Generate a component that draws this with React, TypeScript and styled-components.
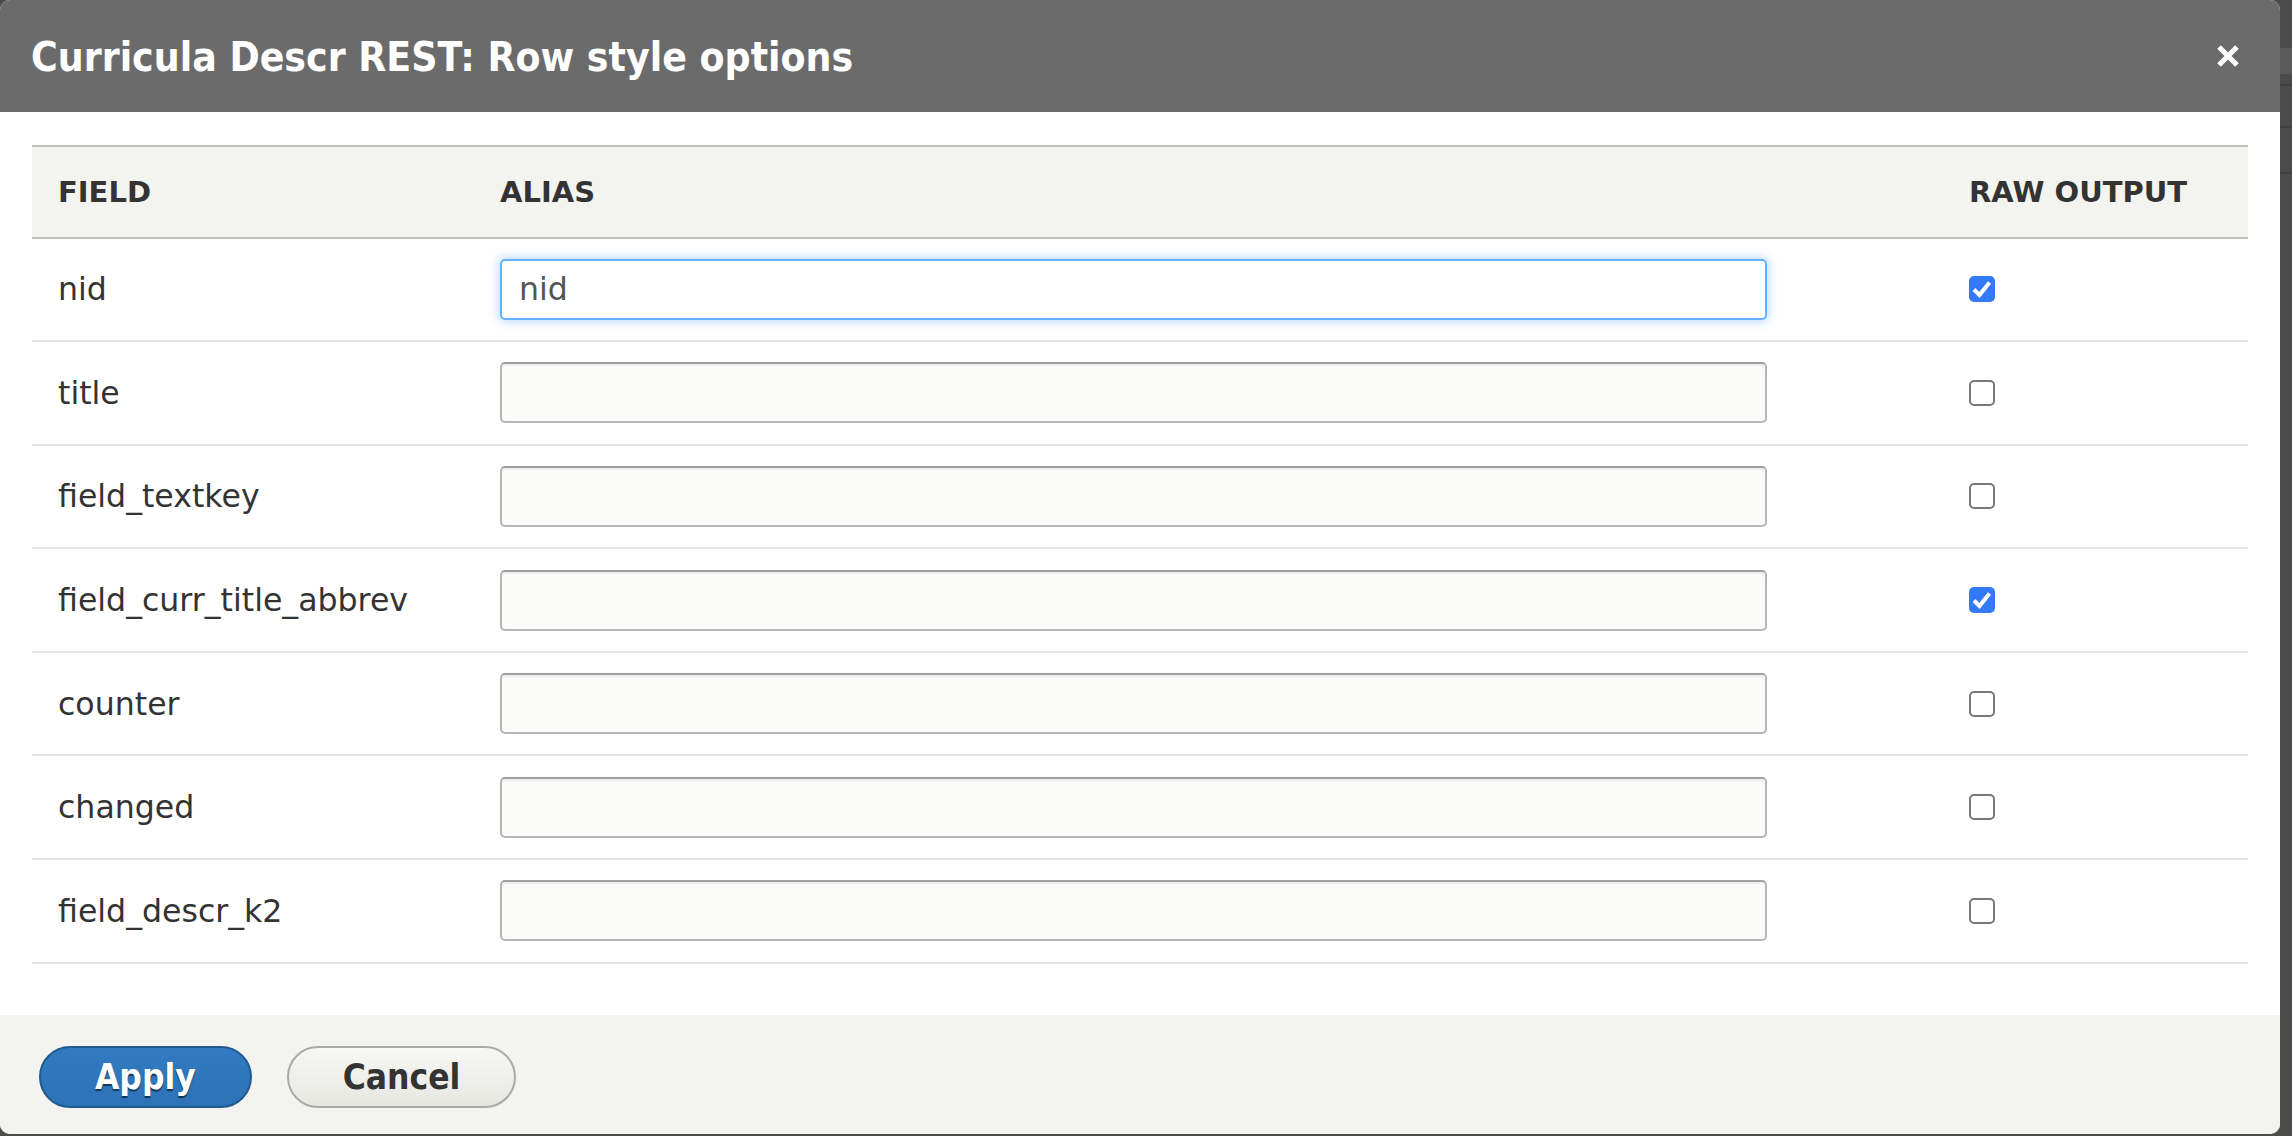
import React from "react";
import styled, { createGlobalStyle } from "styled-components";

const GlobalStyle = createGlobalStyle`
  html, body {
    margin: 0;
    padding: 0;
    background: #4c4c4c;
    overflow: hidden;
  }
  * { box-sizing: border-box; }
`;

const Page = styled.div`
  display: flex;
  width: 2292px;
  height: 1136px;
  background: #4c4c4c;
`;

const Dialog = styled.div`
  width: 2280px;
  height: 1134px;
  flex: none;
  display: flex;
  flex-direction: column;
  background: #ffffff;
  border-radius: 10px;
  overflow: hidden;
`;

const BackdropStrip = styled.div`
  flex: 1;
  height: 100%;
  background:
    linear-gradient(#5a5a5a, #5a5a5a) 0 48px / 100% 26px no-repeat,
    linear-gradient(#3f3f3f, #3f3f3f) 0 84px / 100% 2px no-repeat,
    linear-gradient(#3f3f3f, #3f3f3f) 0 126px / 100% 2px no-repeat,
    linear-gradient(#3f3f3f, #3f3f3f) 0 172px / 100% 2px no-repeat,
    #4b4b4b;
`;

const TitleBar = styled.div`
  height: 112px;
  flex: none;
  display: flex;
  align-items: center;
  justify-content: space-between;
  padding: 0 40px 0 31px;
  background: #6b6b6b;
`;

const Title = styled.h1`
  margin: 0;
  color: #ffffff;
  font-family: "DejaVu Sans Condensed", "DejaVu Sans", sans-serif;
  font-weight: 700;
  font-size: 40.5px;
  line-height: 1;
  padding-top: 2px;
`;

const CloseButton = styled.button`
  width: 24px;
  height: 24px;
  padding: 0;
  border: 0;
  background: transparent;
  display: flex;
  align-items: center;
  justify-content: center;
  cursor: pointer;
`;

const Body = styled.div`
  flex: 1;
  padding: 33px 32px 0 32px;
`;

const Table = styled.table`
  width: 100%;
  border-collapse: collapse;
  table-layout: fixed;
  font-family: "DejaVu Sans", sans-serif;
  color: #333333;
`;

const HeadRow = styled.tr`
  background: #f3f3ef;
  border-top: 2px solid #bfbfba;
  border-bottom: 2px solid #bfbfba;
`;

const HeadCell = styled.th`
  height: 91.5px;
  padding: 0 26px;
  text-align: left;
  font-size: 29px;
  font-weight: 700;
  text-transform: uppercase;
  color: #333333;
  white-space: nowrap;
`;

const Row = styled.tr`
  border-bottom: 2px solid #e6e5e0;
`;

const Cell = styled.td`
  height: 103.6px;
  padding: 0 26px;
  font-size: 31.6px;
  color: #333333;
  vertical-align: middle;
  white-space: nowrap;
`;

const TextInput = styled.input<{ $focused?: boolean }>`
  display: block;
  width: 1267px;
  height: 61px;
  padding: 0 17px;
  border-radius: 5px;
  font-family: "DejaVu Sans", sans-serif;
  font-size: 31.6px;
  color: #555555;
  outline: none;
  ${(p) =>
    p.$focused
      ? `
    background: #ffffff;
    border: 2px solid #63b1fa;
    box-shadow: 0 0 10px 2px rgba(110, 180, 255, 0.45);
  `
      : `
    background: #fbfbf9;
    border: 2px solid #b6b6b6;
    border-top-color: #a0a0a0;
    box-shadow: inset 0 2px 2px rgba(0, 0, 0, 0.06);
  `}
`;

const CheckBox = styled.span<{ $checked?: boolean }>`
  display: flex;
  align-items: center;
  justify-content: center;
  width: 26px;
  height: 26px;
  border-radius: 5px;
  ${(p) =>
    p.$checked
      ? `background: #3479f6; border: 0;`
      : `background: #ffffff; border: 2px solid #787878;`}
`;

const Footer = styled.div`
  flex: none;
  height: 119px;
  display: flex;
  align-items: flex-start;
  gap: 35px;
  padding: 31px 39px 0 39px;
  background: #f3f3ef;
`;

const Button = styled.button<{ $primary?: boolean }>`
  height: 62px;
  padding: 0 54px;
  border-radius: 31px;
  font-family: "DejaVu Sans Condensed", "DejaVu Sans", sans-serif;
  font-weight: 700;
  font-size: 35px;
  line-height: 1;
  cursor: pointer;
  ${(p) =>
    p.$primary
      ? `
    color: #ffffff;
    background: linear-gradient(#317bc2, #2d72b6);
    border: 2px solid #22598f;
    text-shadow: 0 2px 1px rgba(0, 0, 0, 0.55);
  `
      : `
    color: #333333;
    background: linear-gradient(#f7f7f4, #e7e7e2);
    border: 2px solid #a9a9a9;
  `}
`;

const fields: { name: string; alias: string; raw: boolean; focused?: boolean }[] = [
  { name: "nid", alias: "nid", raw: true, focused: true },
  { name: "title", alias: "", raw: false },
  { name: "field_textkey", alias: "", raw: false },
  { name: "field_curr_title_abbrev", alias: "", raw: true },
  { name: "counter", alias: "", raw: false },
  { name: "changed", alias: "", raw: false },
  { name: "field_descr_k2", alias: "", raw: false },
];

const CloseIcon = () => (
  <svg width="24" height="24" viewBox="0 0 24 24">
    <path d="M3 3 L21 21 M21 3 L3 21" stroke="#ffffff" strokeWidth="5" strokeLinecap="butt" />
  </svg>
);

const CheckIcon = () => (
  <svg width="26" height="26" viewBox="0 0 26 26">
    <path d="M5 13.5 L10.5 19 L20.5 6.5" stroke="#ffffff" strokeWidth="4" fill="none" strokeLinejoin="miter" />
  </svg>
);

export default function App() {
  return (
    <>
      <GlobalStyle />
      <Page>
        <Dialog>
          <TitleBar>
            <Title>Curricula Descr REST: Row style options</Title>
            <CloseButton aria-label="Close">
              <CloseIcon />
            </CloseButton>
          </TitleBar>
          <Body>
            <Table>
              <colgroup>
                <col style={{ width: "442px" }} />
                <col style={{ width: "1469px" }} />
                <col />
              </colgroup>
              <thead>
                <HeadRow>
                  <HeadCell>Field</HeadCell>
                  <HeadCell>Alias</HeadCell>
                  <HeadCell>Raw output</HeadCell>
                </HeadRow>
              </thead>
              <tbody>
                {fields.map((f) => (
                  <Row key={f.name}>
                    <Cell>{f.name}</Cell>
                    <Cell>
                      <TextInput $focused={f.focused} defaultValue={f.alias} />
                    </Cell>
                    <Cell>
                      <CheckBox $checked={f.raw}>{f.raw && <CheckIcon />}</CheckBox>
                    </Cell>
                  </Row>
                ))}
              </tbody>
            </Table>
          </Body>
          <Footer>
            <Button $primary>Apply</Button>
            <Button>Cancel</Button>
          </Footer>
        </Dialog>
        <BackdropStrip />
      </Page>
    </>
  );
}
